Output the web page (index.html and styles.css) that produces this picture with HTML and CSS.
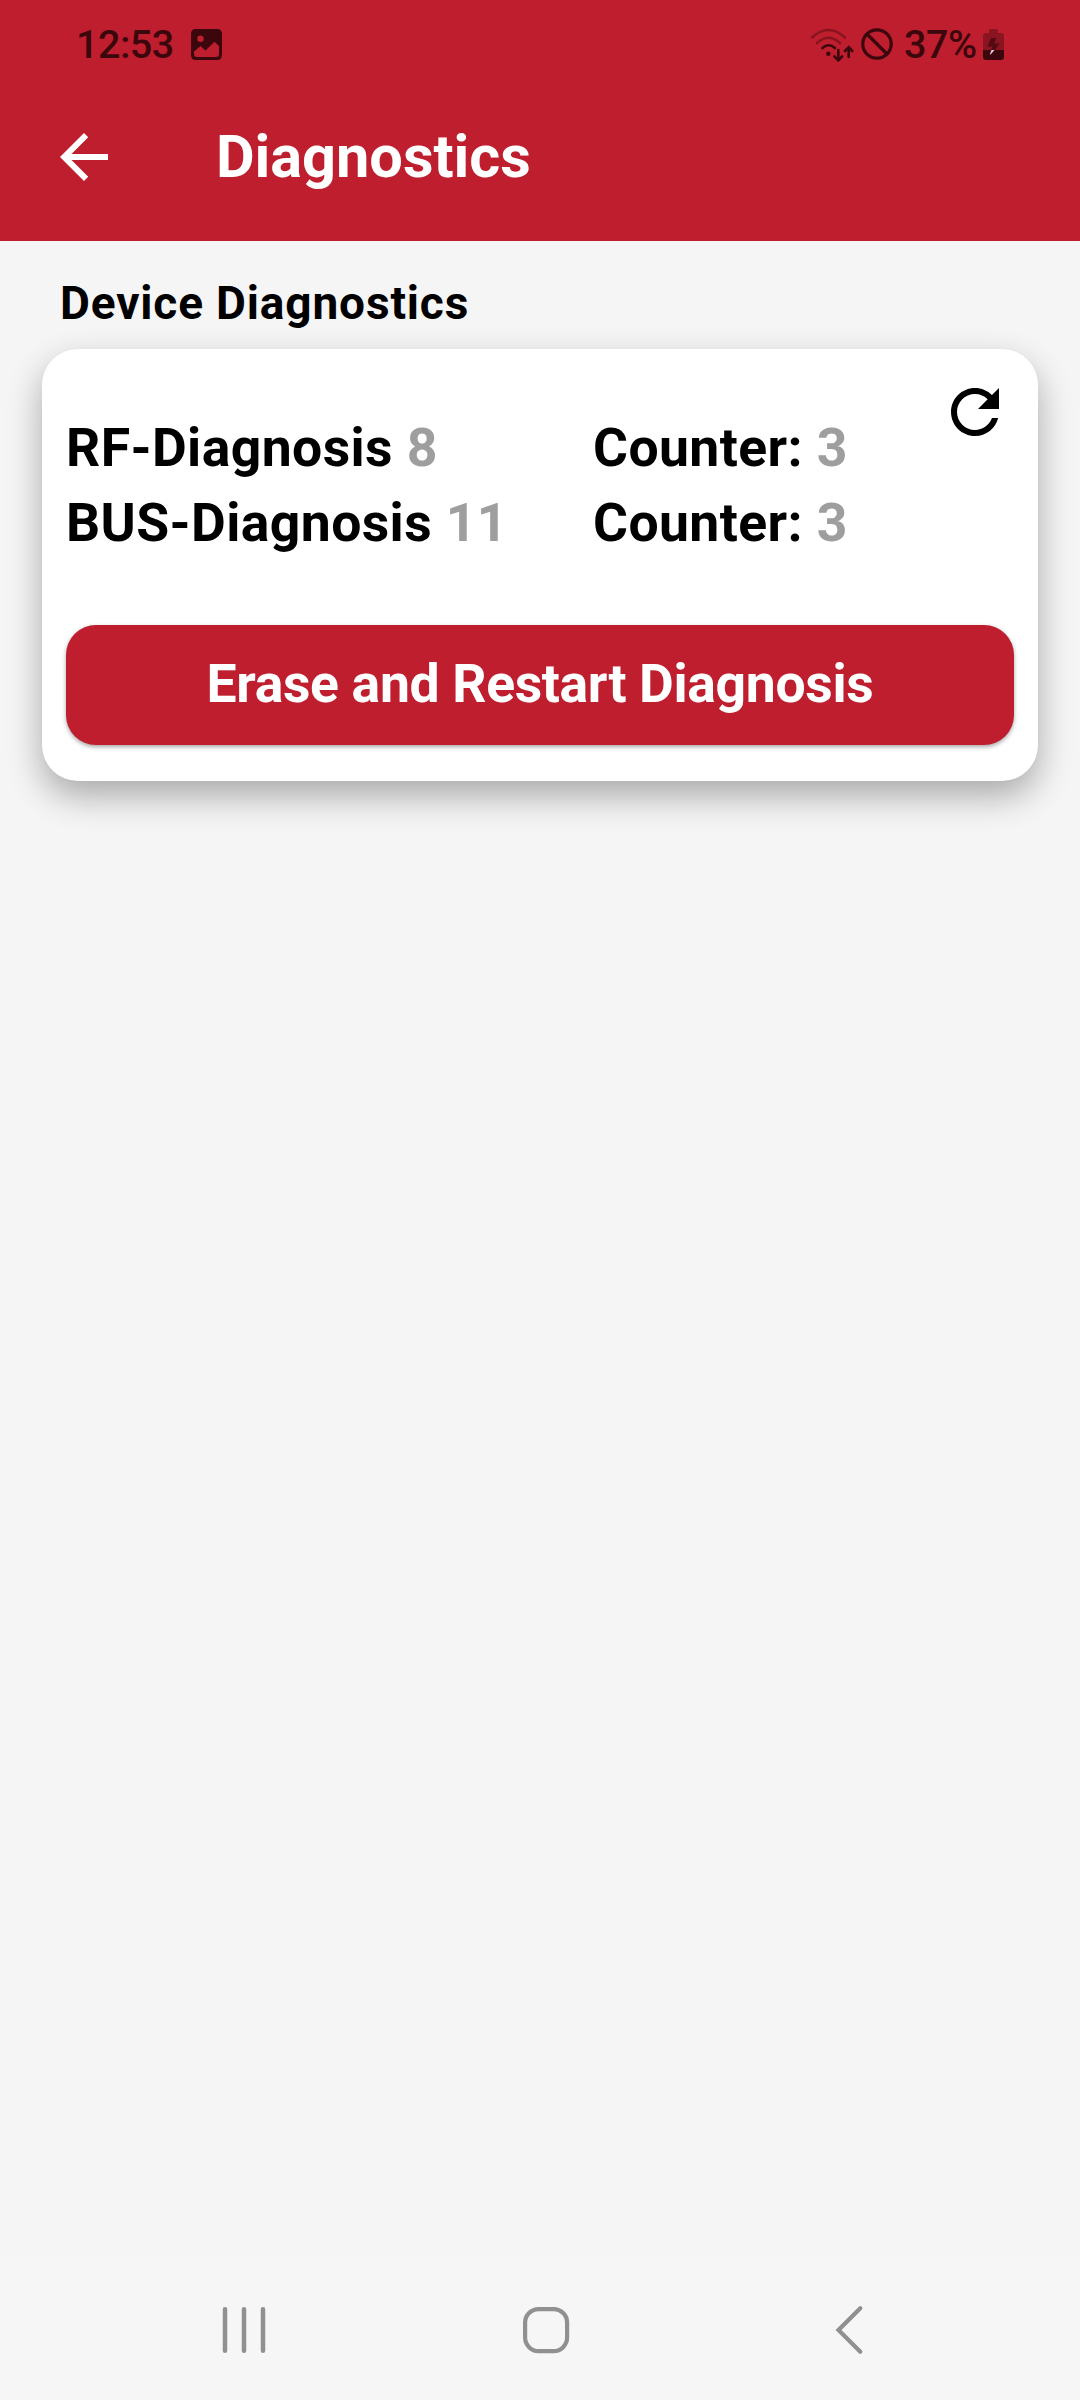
FILE: index.html
```html
<!DOCTYPE html>
<html lang="en">
<head>
<meta charset="utf-8">
<title>Diagnostics</title>
<link rel="stylesheet" href="styles.css">
</head>
<body>
<div class="screen">
  <header class="header">
    <div class="status">
      <span class="clock">12:53</span>
      <svg class="photo" width="31" height="31" viewBox="0 0 31 31"><path fill="currentColor" fill-rule="evenodd" d="M5 0H26Q31 0 31 5V26Q31 31 26 31H5Q0 31 0 26V5Q0 0 5 0ZM9.500 6.500A3.200 3.200 0 1 0 9.500 12.900A3.200 3.200 0 1 0 9.500 6.500ZM3 22.500V25Q3 28 6 28H25Q28 28 28 25V17L23.500 12.800L14.500 21.500L9.500 17Z"/></svg>
      <div class="indicators">
        <svg class="wifi" width="44" height="34" viewBox="0 0 44 34" fill="none" stroke="currentColor" stroke-width="2.600" stroke-linecap="round"><g opacity=".4"><path d="M2 9.500Q18.500-5.500 35 9.500"/><path d="M7 15Q18.500 4.500 30 15"/></g><path d="M12.500 20Q18.500 14.500 25 20"/><circle cx="18.300" cy="25.700" r="2.200" fill="currentColor" stroke="none"/><path d="M28.300 22V32M24.500 28.500L28.300 32.300L32 28.500M38.700 29V19.500M35 23L38.700 19.200L42.300 23"/></svg>
        <svg class="blocked" width="32" height="34" viewBox="0 0 32 34" fill="none" stroke="currentColor" stroke-width="3.200"><circle cx="16" cy="16" r="14.200"/><path d="M6 6L26 26"/></svg>
        <span class="percent">37%</span>
        <svg class="battery" width="21" height="31" viewBox="0 0 21 31"><path fill="currentColor" opacity=".4" d="M6 1.500Q6 0 7.500 0H13.500Q15 0 15 1.500V4H18Q21 4 21 7V21H0V7Q0 4 3 4H6Z"/><path fill="currentColor" d="M0 21H21V28Q21 31 18 31H3Q0 31 0 28Z"/><path fill="currentColor" opacity=".7" d="M8 9H13.500L11 14.500H16.500L12 21H8L9.500 17.500H4.500Z"/><path fill="#f4d5da" d="M8.500 21H11.500L7.500 25.500H6.800Z"/></svg>
      </div>
    </div>
    <div class="appbar">
      <svg width="72" height="72" viewBox="0 0 24 24"><path fill="#fff" d="M20 11H7.830l5.590-5.590L12 4l-8 8 8 8 1.410-1.410L7.830 13H20v-2z"/></svg>
      <h1 class="title">Diagnostics</h1>
    </div>
  </header>
  <main class="content">
    <h2 class="section-title">Device Diagnostics</h2>
    <section class="card">
      <div class="readings">
        <div class="names">
          <div>RF-Diagnosis <span class="value">8</span></div>
          <div>BUS-Diagnosis <span class="value">11</span></div>
        </div>
        <div class="counters">
          <div>Counter: <span class="value">3</span></div>
          <div>Counter: <span class="value">3</span></div>
        </div>
        <svg class="refresh" width="72" height="72" viewBox="0 0 24 24"><path d="M17.650 6.350C16.200 4.900 14.210 4 12 4c-4.420 0-7.990 3.580-7.990 8s3.570 8 7.990 8c3.730 0 6.840-2.550 7.730-6h-2.080c-.82 2.330-3.040 4-5.650 4-3.310 0-6-2.690-6-6s2.690-6 6-6c1.660 0 3.140.69 4.220 1.780L13 11h7V4l-2.350 2.350z"/></svg>
      </div>
      <button class="erase"><span>Erase and Restart Diagnosis</span></button>
    </section>
  </main>
  <nav class="navbar">
    <svg width="48" height="50" viewBox="0 0 48 50" fill="none" stroke="currentColor" stroke-width="4.500" stroke-linecap="round"><path d="M5 4.300V45.700M24 4.300V45.700M43 4.300V45.700"/></svg>
    <svg class="home" width="48" height="50" viewBox="0 0 48 50" fill="none" stroke="currentColor" stroke-width="4.200"><rect x="3.100" y="4.100" width="42" height="42" rx="13.500"/></svg>
    <svg width="30" height="50" viewBox="0 0 30 50" fill="none" stroke="currentColor" stroke-width="4.200" stroke-linecap="round"><path d="M26.300 3.200L4.500 25L26.300 46.800"/></svg>
  </nav>
</div>
</body>
</html>
```
FILE: styles.css
```css
* { box-sizing: border-box; }
body { margin: 0; font-family: Roboto, sans-serif; background: #f5f5f5; }
svg { display: block; flex: none; }
.screen { width: 1080px; height: 2400px; display: flex; flex-direction: column; }
.header { height: 241px; background: #be1e2d; }
.status { height: 85px; display: flex; align-items: center; padding: 4px 76px 0 76px; color: #3b070d; font-size: 39.500px; font-weight: 500; line-height: 46px; letter-spacing: -.5px; white-space: nowrap; }
.clock { width: 115px; }
.indicators { margin-left: auto; display: flex; align-items: center; }
.blocked { margin: 0 11px 0 7px; }
.percent { width: 72px; }
.battery { margin-left: 7px; }
.appbar { height: 144px; display: flex; align-items: center; padding-left: 48px; gap: 96px; }
.title { margin: 0; color: #fff; font-size: 59.500px; font-weight: 700; line-height: 72px; letter-spacing: -.05px; white-space: nowrap; }
.content { flex: 1; padding: 32px 42px 0; }
.section-title { margin: 0 0 16px 18px; font-size: 46px; font-weight: 700; line-height: 60px; letter-spacing: .85px; white-space: nowrap; }
.card { height: 432px; padding: 27px 24px 36px; background: #fff; border-radius: 36px; box-shadow: 0 15px 34px rgba(0, 0, 0, .31); display: flex; flex-direction: column; justify-content: space-between; }
.readings { display: flex; font-size: 53.500px; font-weight: 700; line-height: 75px; letter-spacing: .4px; white-space: nowrap; }
.names { width: 527px; padding-top: 34px; }
.counters { flex: 1; padding-top: 34px; }
.value { color: #9e9e9e; }
.refresh { margin-right: 3px; }
.erase { height: 120px; padding: 0 0 2px; border: 0; border-radius: 30px; background: #be1e2d; color: #fff; font: 700 53.500px/64px Roboto, sans-serif; letter-spacing: -.35px; box-shadow: 0 2px 4px rgba(0, 0, 0, .35); white-space: nowrap; }
.navbar { height: 143px; background: #f6f6f6; color: #909090; display: flex; align-items: center; justify-content: space-between; padding: 3px 216px 0 220px; }
.home { margin-right: 10px; }
```
